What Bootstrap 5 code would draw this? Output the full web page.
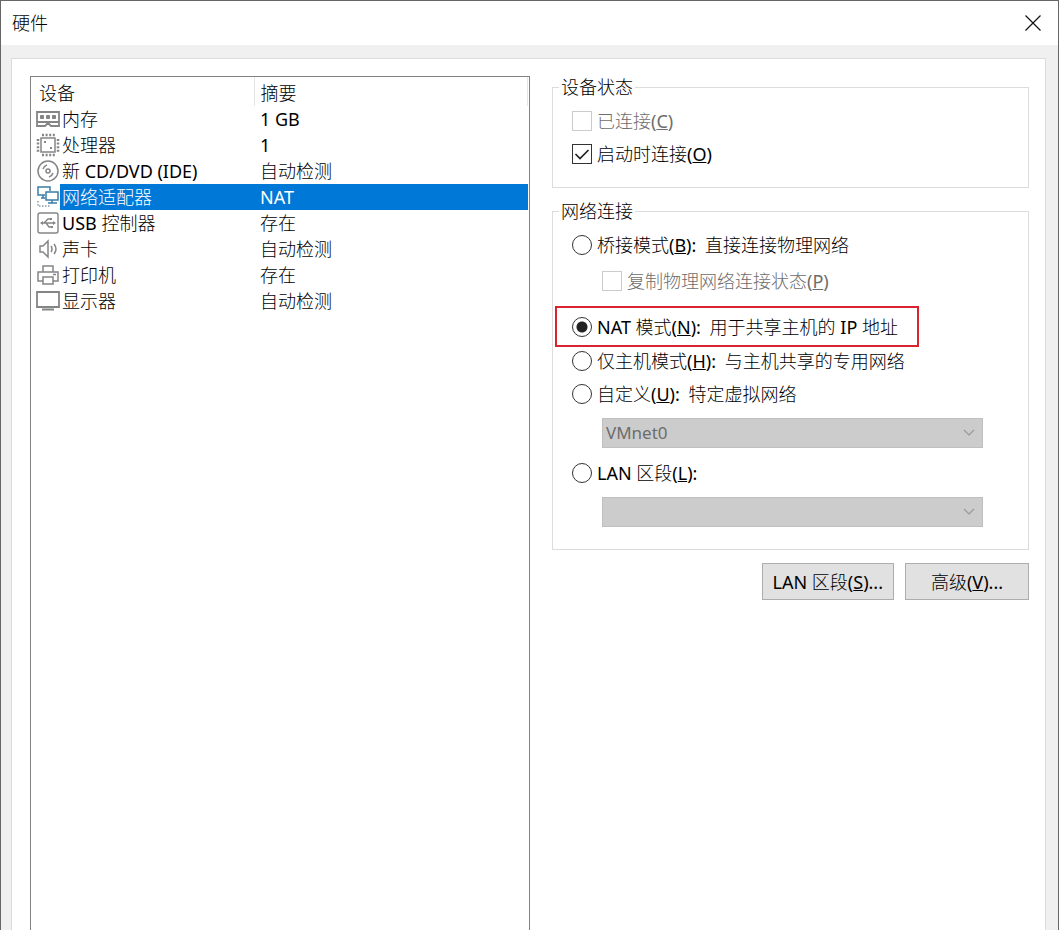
<!DOCTYPE html>
<html lang="zh-CN">
<head>
<meta charset="utf-8">
<meta name="viewport" content="width=device-width, initial-scale=1">
<title>硬件</title>
<link href="https://cdn.jsdelivr.net/npm/bootstrap@5.3.0/dist/css/bootstrap.min.css" rel="stylesheet">
<style>
body { font-family: "Noto Sans Medium", "Noto Sans", "Noto Sans CJK SC Light", "Noto Sans CJK SC", sans-serif; font-size: 18px; line-height: 22px; color: #000; background: #fff; }
.dialog { border: 1px solid #666; border-bottom: 0; background: #f0f0f0; }
.titlebar { height: 44px; padding: 0 16px 0 11px; background: #fff; }
.close-x { width: 18px; height: 18px; }
.sheet { margin: 13px 12px 0 10px; padding: 17px 16px 0 18px; background: #fff; border: 1px solid #dcdcdc; border-bottom: 0; display: grid; grid-template-columns: 500fr 477fr; gap: 22px; }
.devices { border: 1px solid #828282; border-bottom: 0; padding-right: 1px; }
.devices table { table-layout: fixed; }
.devices td, .devices th { padding: 0; font-weight: 400; white-space: nowrap; }
.devices th { height: 29px; padding: 2px 8px 0; border-right: 1px solid #e5e5e5; }
.devices th + th { padding-left: 6px; }
.devices td { height: 26px; padding: 0 0 0 2px; }
.devices td + td + td { padding-left: 6px; }
.devices td svg { display: block; width: 24px; height: 24px; margin-left: 5px; }
.devices td:first-child { padding: 0; }
.col-icon { width: 29px; }
.col-name { width: 194px; }
.picked td + td { background: #0078d7; color: #fff; }
.group { border: 1px solid #dcdcdc; }
.group legend { font-size: 18px; line-height: 22px; margin: 0 0 0 6px; padding: 0 2px; }
.state-group { padding-bottom: 19px; }
.net-group { margin-top: 12px; padding-bottom: 22px; }
.opt { display: flex; align-items: center; height: 28px; margin-left: 19px; gap: 5px; white-space: nowrap; }
.group legend + .opt { margin-top: 9px; }
.indent { margin-left: 49px; }
.opt input { appearance: none; flex: none; width: 20px; height: 20px; margin: 0; border: 1px solid #333; background: #fff center/100% no-repeat; }
.opt input[type=radio] { border-radius: 50%; }
.opt input[type=radio]:checked { background-image: radial-gradient(circle, #222 5px, transparent 6px); }
.opt input[type=checkbox]:checked { background-image: url("data:image/svg+xml,%3Csvg xmlns='http://www.w3.org/2000/svg' viewBox='0 0 18 18'%3E%3Cpath d='M2.5 9l4.5 4.5L15.5 5' fill='none' stroke='%23222' stroke-width='1.7'/%3E%3C/svg%3E"); }
.opt input:disabled { border-color: #ccc; }
.opt input:disabled + label { color: #6d6d6d; }
.desc { margin-left: 4px; }
.marked { width: fit-content; height: 41px; margin-left: 2px; padding: 0 19px 0 15px; border: 2px solid #d9232e; }
.combo { display: block; width: calc(100% - 94px); height: 30px; margin-left: 49px; padding: 0 3px; border: 1px solid #bfbfbf; border-radius: 0; appearance: none; color: #6d6d6d; font-family: "Noto Sans", sans-serif; font-size: 17px; opacity: 1;
  background: #ccc url("data:image/svg+xml,%3Csvg xmlns='http://www.w3.org/2000/svg' viewBox='0 0 12 8'%3E%3Cpath d='M1 1l5 5 5-5' fill='none' stroke='%23999' stroke-width='1.2'/%3E%3C/svg%3E") no-repeat right 7px center/12px 8px; }
.push { min-width: 124px; height: 37px; padding: 0 10px; border: 1px solid #adadad; border-radius: 0; background: #e1e1e1; color: #000; font-size: 18px; line-height: 22px; }
.gap-buttons { gap: 11px; margin-top: 13px; }
.mt-a { margin-top: 5px; } .mt-b { margin-top: 8px; } .mt-c { margin-top: 11px; } .mt-d { margin-top: 10px; }
</style>
</head>
<body>
<main class="dialog min-vh-100 d-flex flex-column">
  <header class="titlebar d-flex align-items-center justify-content-between">
    <span>硬件</span>
    <button type="button" class="btn p-0 border-0 d-flex" aria-label="关闭">
      <svg class="close-x" viewBox="0 0 18 18" fill="none" stroke="#111" stroke-width="1.2"><path d="M1.5 1.5l15 15M16.5 1.5l-15 15"/></svg>
    </button>
  </header>
  <div class="sheet flex-grow-1">
    <section class="devices">
      <table class="w-100">
        <colgroup><col class="col-icon"><col class="col-name"><col></colgroup>
        <thead><tr><th colspan="2">设备</th><th>摘要</th></tr></thead>
        <tbody>
          <tr><td><svg viewBox="0 0 24 24" fill="none" stroke="#858585" stroke-width="1.8"><path d="M1 5h22v14h-8l-2-2h-2l-2 2H1zM1 15h22"/><g fill="#858585" stroke-width="1"><path d="M4.500 8.500h3v3h-3zM10.500 8.500h3v3h-3zM16.500 8.500h3v3h-3z"/></g></svg></td><td>内存</td><td>1 GB</td></tr>
          <tr><td><svg viewBox="0 0 24 24" fill="none" stroke="#858585" stroke-width="1.5"><rect x="5" y="5" width="14" height="14"/><path d="M6 2h13M6 22h13" stroke-width="2.500" stroke-dasharray="2 1.600"/><path d="M2 6v13M22 6v13" stroke-width="2.500" stroke-dasharray="2 1.600"/><path d="M8 8h2v2H8zM14 14h2v2h-2z" fill="#858585" stroke="none"/></svg></td><td>处理器</td><td>1</td></tr>
          <tr><td><svg viewBox="0 0 24 24" fill="none" stroke="#858585" stroke-width="1.5"><circle cx="12" cy="12" r="10"/><circle cx="12" cy="12" r="2"/><path d="M7 10a6 6 0 0 1 4-4M17 14a6 6 0 0 1-4 4"/></svg></td><td>新 CD/DVD (IDE)</td><td>自动检测</td></tr>
          <tr class="picked"><td><svg viewBox="0 0 24 24" fill="none" stroke="#3a7ca5" stroke-width="1.500"><path d="M9 10H2V2h12v4M5 13h4M7 10v3"/><path d="M10 7h12v8H10zM16 15v3M12 18h9"/><path d="M2 16v5h12" stroke="#8a9aa5" stroke-dasharray="1.500 1.500"/></svg></td><td>网络适配器</td><td>NAT</td></tr>
          <tr><td><svg viewBox="0 0 24 24" fill="none" stroke="#858585" stroke-width="1.400"><rect x="2" y="2" width="20" height="20" rx="2"/><path d="M5 12h14M8 12l4-4h3M10 12l3 4h3"/><path d="M4 12l3-2v4zM20 12l-3-2v4zM14 7h2v2h-2zM15 15h2v2h-2z" fill="#858585" stroke="none"/></svg></td><td>USB 控制器</td><td>存在</td></tr>
          <tr><td><svg viewBox="0 0 24 24" fill="none" stroke="#858585" stroke-width="1.500"><path d="M4 9h3l5-5v16l-5-5H4zM15 9q2 3 0 6M18 7q4 5 0 10"/></svg></td><td>声卡</td><td>自动检测</td></tr>
          <tr><td><svg viewBox="0 0 24 24" fill="none" stroke="#858585" stroke-width="1.500"><path d="M7 9V3h10v6M7 18H2V9h20v9h-5M7 14h10v7H7zM17 11.500h3"/></svg></td><td>打印机</td><td>存在</td></tr>
          <tr><td><svg viewBox="0 0 24 24" fill="none" stroke="#858585" stroke-width="1.800"><path d="M1 3h22v15H1zM6 20.500h12"/></svg></td><td>显示器</td><td>自动检测</td></tr>
        </tbody>
      </table>
    </section>
    <section>
      <fieldset class="group state-group">
        <legend class="float-none w-auto">设备状态</legend>
        <div class="opt"><input type="checkbox" id="connected" disabled><label for="connected">已连接(<u>C</u>)</label></div>
        <div class="opt mt-a"><input type="checkbox" id="poweron" checked><label for="poweron">启动时连接(<u>O</u>)</label></div>
      </fieldset>
      <fieldset class="group net-group">
        <legend class="float-none w-auto">网络连接</legend>
        <div class="opt"><input type="radio" name="net" id="bridged"><label for="bridged">桥接模式(<u>B</u>): <span class="desc">直接连接物理网络</span></label></div>
        <div class="opt indent mt-b"><input type="checkbox" id="replicate" disabled><label for="replicate">复制物理网络连接状态(<u>P</u>)</label></div>
        <div class="opt marked mt-c"><input type="radio" name="net" id="nat" checked><label for="nat">NAT 模式(<u>N</u>): <span class="desc">用于共享主机的 IP 地址</span></label></div>
        <div class="opt"><input type="radio" name="net" id="host"><label for="host">仅主机模式(<u>H</u>): <span class="desc">与主机共享的专用网络</span></label></div>
        <div class="opt mt-a"><input type="radio" name="net" id="custom"><label for="custom">自定义(<u>U</u>): <span class="desc">特定虚拟网络</span></label></div>
        <select class="combo mt-d" aria-label="虚拟网络" disabled><option>VMnet0</option></select>
        <div class="opt mt-c"><input type="radio" name="net" id="lan"><label for="lan">LAN 区段(<u>L</u>):</label></div>
        <select class="combo mt-d" aria-label="LAN 区段" disabled></select>
      </fieldset>
      <div class="d-flex justify-content-end gap-buttons">
        <button type="button" class="btn push">LAN 区段(<u>S</u>)...</button>
        <button type="button" class="btn push">高级(<u>V</u>)...</button>
      </div>
    </section>
  </div>
</main>
<script src="https://cdn.jsdelivr.net/npm/bootstrap@5.3.0/dist/js/bootstrap.bundle.min.js"></script>
</body>
</html>
